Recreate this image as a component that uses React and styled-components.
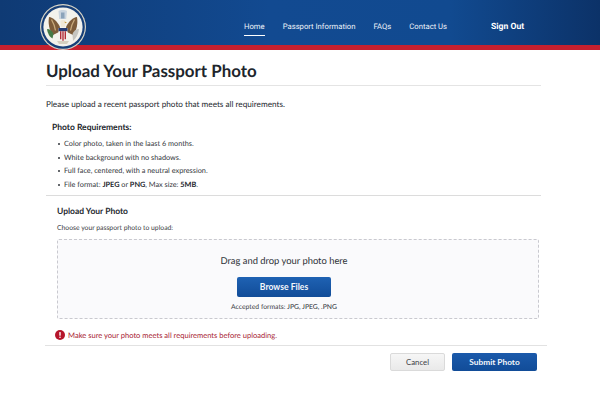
import React from "react";
import styled, { createGlobalStyle } from "styled-components";

const GlobalStyle = createGlobalStyle`
  html, body {
    margin: 0;
    padding: 0;
    background: #fff;
    font-family: Lato, "Liberation Sans", sans-serif;
    color: #22262c;
    text-rendering: geometricPrecision;
  }
`;

const requirements = [
  "Color photo, taken in the laast 6 months.",
  "White background with no shadows.",
  "Full face, centered, with a neutral expression.",
];

function Seal() {
  return (
    <svg width="46" height="46" viewBox="0 0 46 46">
      <circle cx="23" cy="23" r="23" fill="#d9d6c8" />
      <circle cx="23" cy="23" r="21.800" fill="#173f78" />
      <circle cx="23" cy="23" r="19.600" fill="#f3f2ec" />
      {/* crest above the eagle */}
      <path d="M18.500 7c2-1.200 6.500-1.200 8.500 0l-.8 8h-7z" fill="#c9d4df" />
      <path d="M21 8.500h3.500v6H21z" fill="#8ba3ba" />
      {/* wings */}
      <path d="M20 23C17 17 13 13.500 9 13c-1 6 0 13 4 18l6-3z" fill="#7d5c3a" />
      <path d="M26 23c3-6 7-9.500 11-10 1 6 0 13-4 18l-6-3z" fill="#7d5c3a" />
      <path d="M11.500 15.500c2 3.500 3.500 7 4 11M34.500 15.500c-2 3.500-3.500 7-4 11" stroke="#c8aa7c" strokeWidth="1.300" fill="none" />
      {/* head */}
      <path d="M20.500 17c1-1.500 4-1.500 5 0l-.5 6h-4z" fill="#efe8d8" />
      <path d="M24.500 17.500l2.500 1-2 .8z" fill="#c79a3c" />
      {/* shield */}
      <path d="M18.500 24h9v7c0 3-2.500 5-4.500 6-2-1-4.500-3-4.500-6z" fill="#f5f3ee" />
      <path d="M18.500 24h9v3.200h-9z" fill="#263c74" />
      <path d="M20 27.200h1.400v8h-1.400zM22.300 27.200h1.400v9.500h-1.400zM24.600 27.200H26v8h-1.400z" fill="#b32d38" />
      {/* olive branch and arrows */}
      <path d="M7 25c3 0 5.500 2 6.500 5l-1 4.500C9.500 33 7.500 29 7 25z" fill="#447a46" />
      <path d="M39 25c-3 0-5.500 2-6.500 5l.5 7c3-2.500 5.500-7 6-12z" fill="#c5c5c0" />
      {/* tail */}
      <path d="M17 37h12l-2 3h-8z" fill="#d5d0c0" />
    </svg>
  );
}

function AlertIcon() {
  return (
    <svg width="10" height="10" viewBox="0 0 10 10">
      <circle cx="5" cy="5" r="5" fill="#b5152b" />
      <rect x="4.300" y="2" width="1.400" height="3.800" rx="0.500" fill="#fff" />
      <circle cx="5" cy="7.300" r="0.800" fill="#fff" />
    </svg>
  );
}

export default function App() {
  return (
    <Page>
      <GlobalStyle />
      <Header>
        <SealSpot>
          <Seal />
        </SealSpot>
        <Nav>
          <NavLink $active>Home</NavLink>
          <NavLink>Passport Information</NavLink>
          <NavLink>FAQs</NavLink>
          <NavLink>Contact Us</NavLink>
        </Nav>
        <SignOut>Sign Out</SignOut>
      </Header>
      <Main>
        <Title>Upload Your Passport Photo</Title>
        <Intro>Please upload a recent passport photo that meets all requirements.</Intro>
        <Requirements>
          <SubHeading>Photo Requirements:</SubHeading>
          <BulletList>
            {requirements.map((r) => (
              <li key={r}>{r}</li>
            ))}
            <li>
              File format: <b>JPEG</b> or <b>PNG</b>, Max size: <b>5MB</b>.
            </li>
          </BulletList>
        </Requirements>
        <UploadSection>
          <UploadHeading>Upload Your Photo</UploadHeading>
          <ChooseText>Choose your passport photo to upload:</ChooseText>
          <DropZone>
            <DropText>Drag and drop your photo here</DropText>
            <BrowseButton>Browse Files</BrowseButton>
            <Accepted>
              Accepted formats: <strong>JPG, JPEG, .PNG</strong>
            </Accepted>
          </DropZone>
        </UploadSection>
        <Warning>
          <AlertIcon />
          <span>Make sure your photo meets all requirements before uploading.</span>
        </Warning>
        <Footer>
          <CancelButton>Cancel</CancelButton>
          <SubmitButton>Submit Photo</SubmitButton>
        </Footer>
      </Main>
    </Page>
  );
}

const Page = styled.div`
  width: 600px;
  height: 400px;
  overflow: hidden;
  background: #fff;
`;

const Header = styled.header`
  position: relative;
  display: flex;
  align-items: center;
  height: 33px;
  padding: 12px 0 0 244px;
  background: linear-gradient(90deg, #0f3a74 0%, #124a91 45%, #114a90 75%, #0c3268 100%);
  border-bottom: 5px solid #c6202f;
`;

const SealSpot = styled.div`
  position: absolute;
  left: 40px;
  top: 4px;
  width: 46px;
  height: 46px;
`;

const Nav = styled.nav`
  display: flex;
  gap: 18px;
`;

const NavLink = styled.a`
  font-family: Roboto, sans-serif;
  font-size: 7.700px;
  line-height: 12px;
  padding-bottom: 2px;
  color: #eef3fa;
  border-bottom: 1px solid ${(p) => (p.$active ? "#fff" : "transparent")};
`;

const SignOut = styled.a`
  margin-left: 44px;
  padding-bottom: 3px;
  font-family: Roboto, sans-serif;
  font-size: 8.600px;
  line-height: 12px;
  font-weight: 700;
  color: #fff;
`;

const Main = styled.main`
  width: 495px;
  margin-left: 46px;
`;

const Title = styled.h1`
  margin: 0;
  padding: 10px 0 4px;
  height: 21px;
  line-height: 21px;
  font-size: 16.900px;
  font-weight: 700;
  color: #20252c;
  border-bottom: 1px solid #e4e4e4;
`;

const Intro = styled.p`
  margin: 12px 0 0;
  font-size: 8.200px;
  line-height: 12px;
  color: #24282e;
`;

const Requirements = styled.section`
  padding: 11px 0 4px 6px;
  border-bottom: 1px solid #dcdcdc;
`;

const SubHeading = styled.h2`
  margin: 0;
  font-size: 8.500px;
  line-height: 12px;
  font-weight: 700;
  color: #22262c;
`;

const BulletList = styled.ul`
  margin: 4px 0 0;
  padding: 0 0 0 12px;
  list-style: none;
  font-size: 7.300px;
  line-height: 13.600px;
  color: #33373c;
  li {
    position: relative;
  }
  li::before {
    content: "";
    position: absolute;
    left: -6px;
    top: 6px;
    width: 2px;
    height: 2px;
    border-radius: 50%;
    background: #33373c;
  }
  b {
    font-weight: 700;
    color: #22262c;
  }
`;

const UploadSection = styled.section`
  padding: 9px 2px 0 11px;
`;

const UploadHeading = styled.h2`
  margin: 0;
  font-size: 8.500px;
  line-height: 12px;
  font-weight: 700;
  color: #262a30;
`;

const ChooseText = styled.p`
  margin: 6px 0 0;
  font-size: 6.800px;
  line-height: 10px;
  color: #3c4045;
`;

const DropZone = styled.div`
  margin-top: 6px;
  height: 80px;
  box-sizing: border-box;
  display: flex;
  flex-direction: column;
  align-items: center;
  padding: 15px 28px 0 0;
  background: #fafafc;
  border: 1px dashed #c9c9cf;
  border-radius: 2px;
`;

const DropText = styled.div`
  font-size: 9.400px;
  line-height: 14px;
  color: #2e3237;
`;

const BrowseButton = styled.button`
  margin-top: 8px;
  width: 94px;
  height: 20px;
  padding: 0;
  border: none;
  border-radius: 2px;
  background: linear-gradient(180deg, #1f62b3 0%, #114c98 100%);
  color: #f4f7fb;
  font-family: inherit;
  font-size: 8.600px;
  font-weight: 700;
`;

const Accepted = styled.div`
  margin-top: 5px;
  font-size: 6.800px;
  line-height: 10px;
  color: #3c4045;
  strong {
    font-weight: 400;
    color: #2b2f35;
  }
`;

const Warning = styled.div`
  display: flex;
  align-items: center;
  gap: 3px;
  height: 12px;
  margin: 10px -6px 0 -1px;
  padding: 0 0 4px 10px;
  font-size: 7.550px;
  color: #a81c33;
  border-bottom: 1px solid #e2e2e2;
`;

const Footer = styled.div`
  display: flex;
  justify-content: flex-end;
  gap: 7px;
  padding: 7px 4px 0 0;
`;

const CancelButton = styled.button`
  width: 55px;
  height: 18px;
  padding: 0;
  border: 1px solid #dadada;
  border-radius: 2px;
  background: linear-gradient(180deg, #f6f6f6 0%, #e9e9e9 100%);
  color: #3c4045;
  font-family: inherit;
  font-size: 7.800px;
`;

const SubmitButton = styled.button`
  width: 85px;
  height: 18px;
  padding: 0;
  border: none;
  border-radius: 2px;
  background: linear-gradient(180deg, #1b5aab 0%, #114c98 100%);
  color: #f4f7fb;
  font-family: inherit;
  font-size: 8.300px;
  font-weight: 700;
`;
